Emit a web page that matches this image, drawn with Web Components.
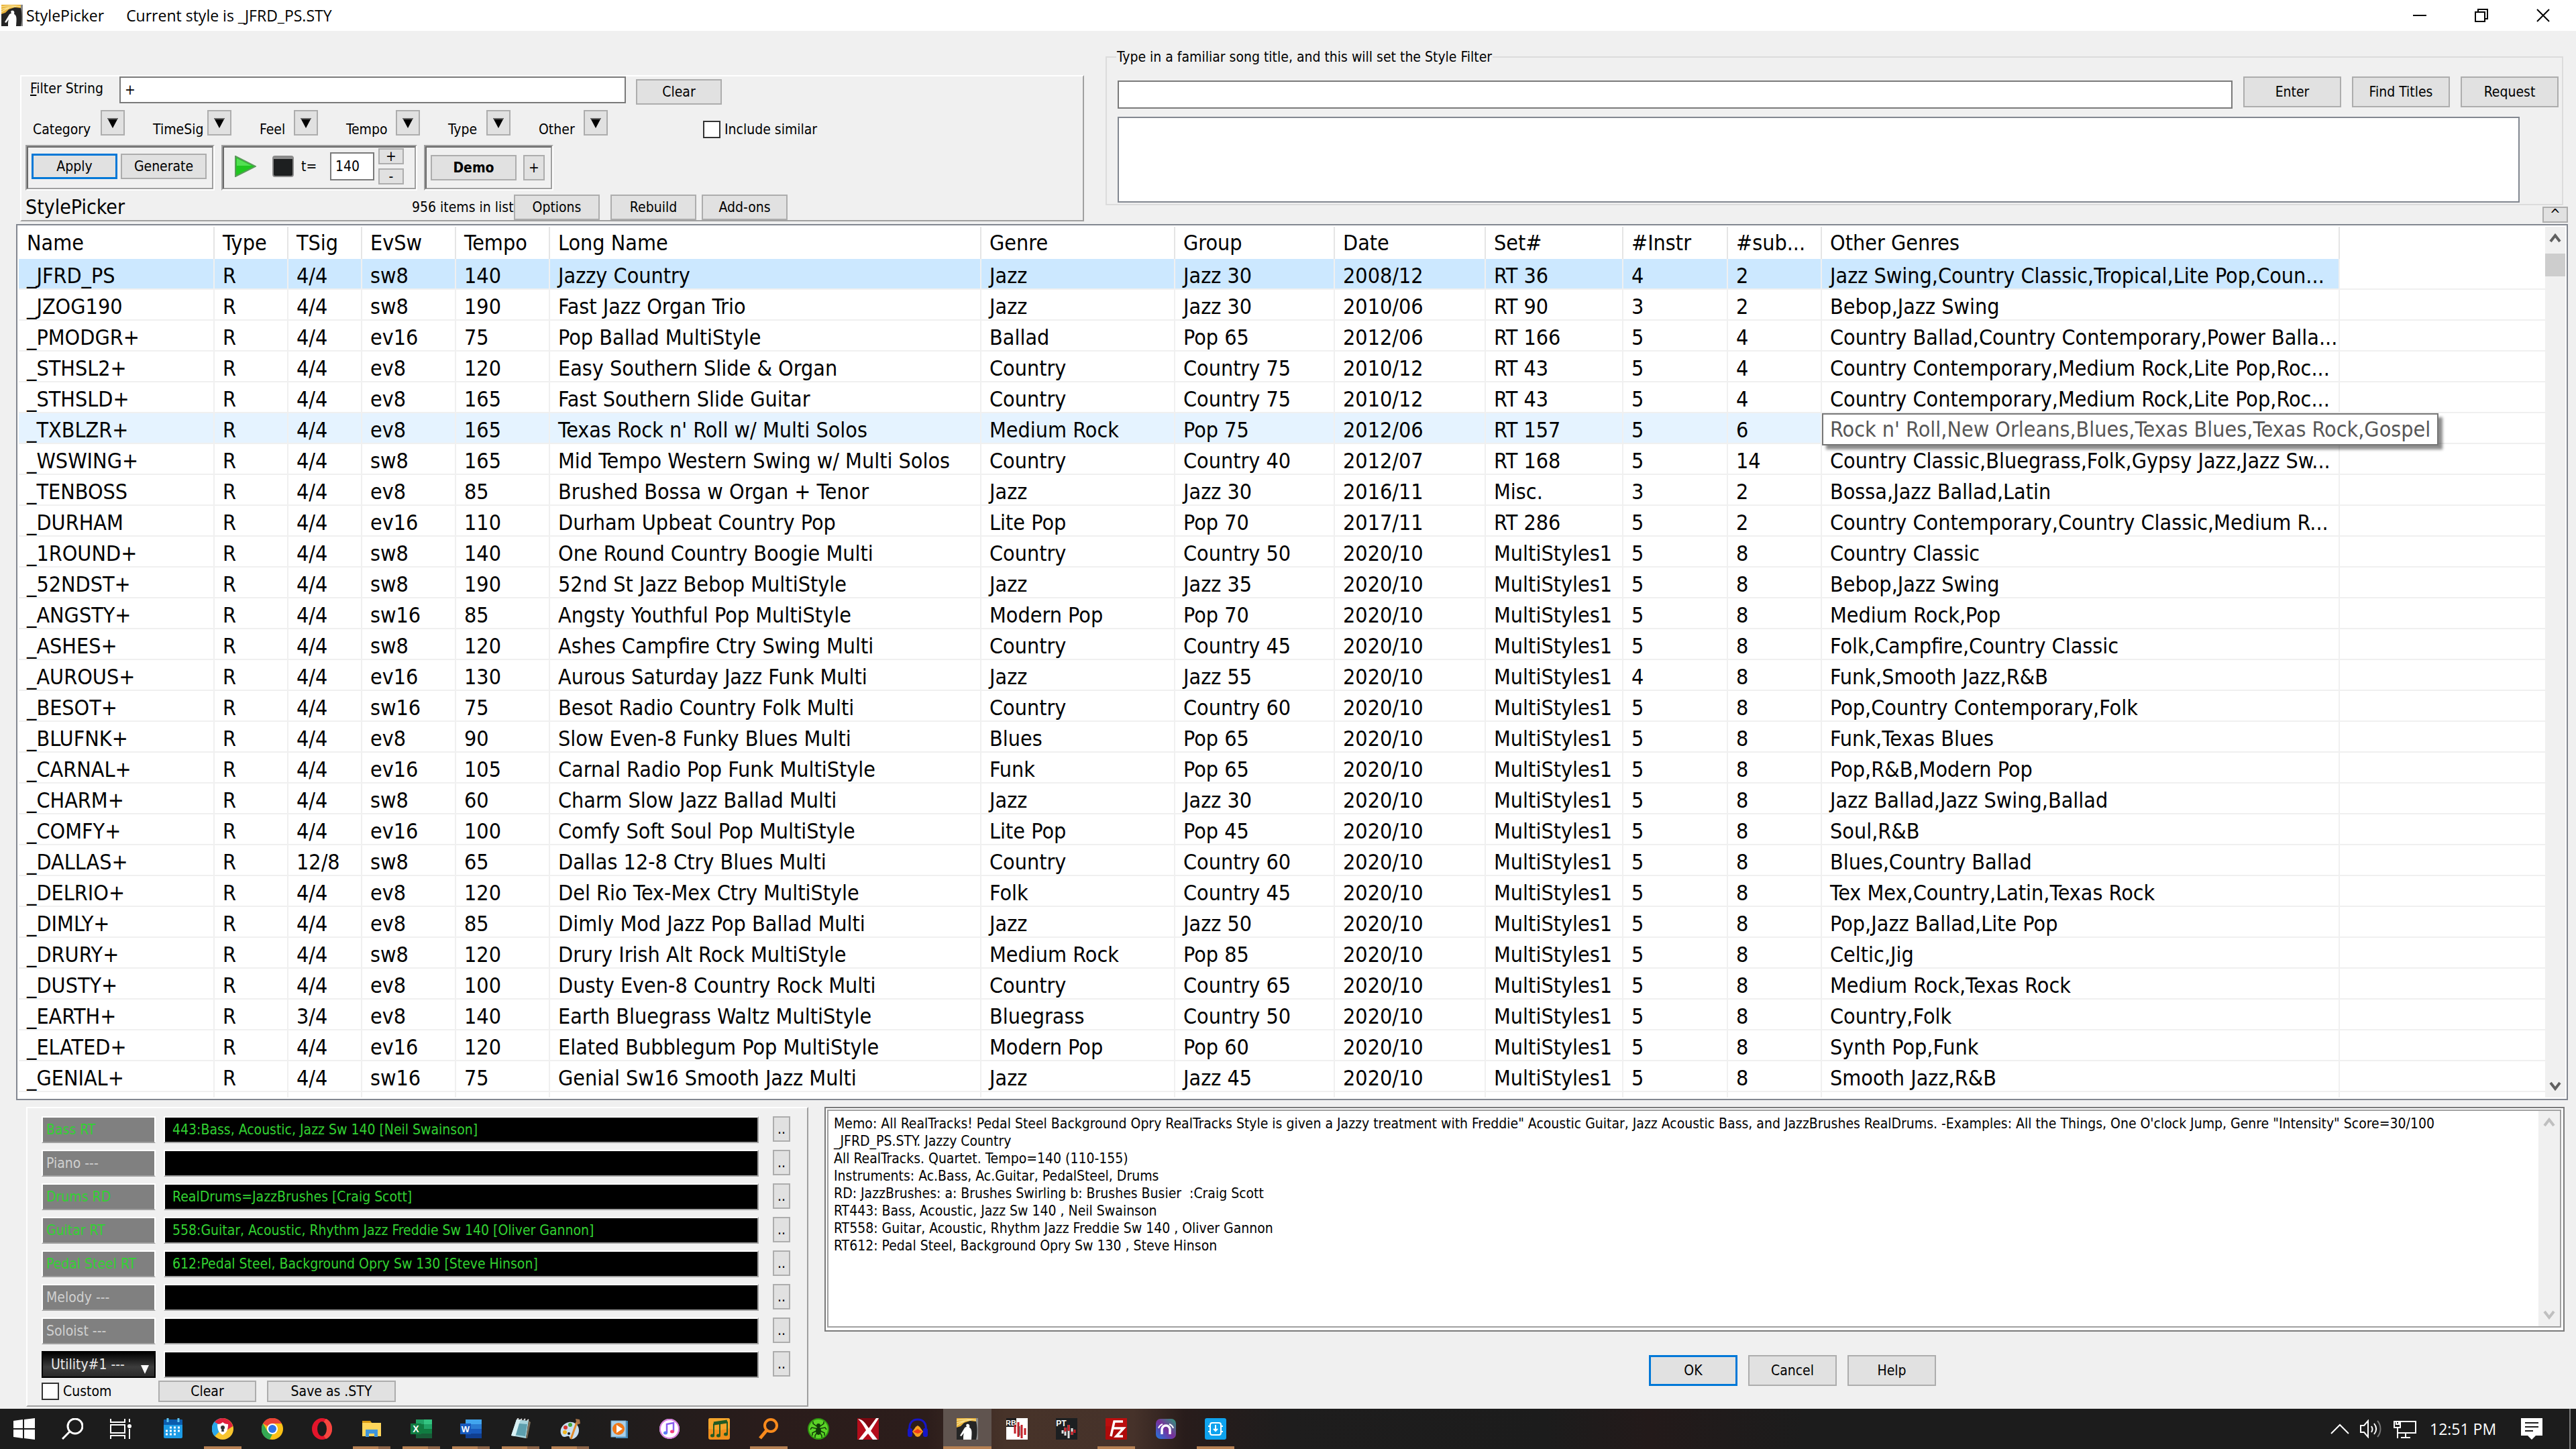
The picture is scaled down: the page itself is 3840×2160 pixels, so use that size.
<!DOCTYPE html>
<html lang="en">
<head>
<meta charset="utf-8">
<title>StylePicker</title>
<style>
  html, body { margin: 0; height: 100%; }
  body {
    --face: #f0f0f0; --btn: #e1e1e1; --btn-line: #adadad; --accent: #0078d7;
    --ui: "DejaVu Sans Condensed", "Noto Sans", sans-serif;
    --shell: "Open Sans", "Noto Sans", sans-serif;
    font: 21px/26px var(--ui); color: #000; background: var(--face);
  }
</style>
</head>
<body>
<style-picker-app></style-picker-app>

<script>
const base = `
  *, *::before, *::after { box-sizing: border-box; }
  :host { display: block; box-sizing: border-box; }
  button, input, select, textarea { font: inherit; color: inherit; margin: 0; padding: 0; border-radius: 0; outline: 0; }
  svg { display: block; flex: none; }
`;
function define(name, html, css, setup) {
  customElements.define(name, class extends HTMLElement {
    connectedCallback() {
      if (this.shadowRoot) return;
      const root = this.attachShadow({ mode: 'open' });
      root.innerHTML = `<style>${base}${css}</style>${typeof html === 'function' ? html(this) : html}`;
      if (setup) setup(this, root);
    }
  });
}

/* Push button; the label is slotted, size comes from the host */
define('win-button', el => `<button type="button"${el.title ? ` aria-label="${el.title}"` : ''}><slot></slot></button>`, `
  :host { width: 128px; height: 38px; flex: none; }
  button { display: flex; align-items: center; justify-content: center; width: 100%; height: 100%;
    background: var(--btn); border: 2px solid var(--btn-line); white-space: nowrap; }
  :host([primary]) button { border: 3px solid var(--accent); }
  :host([bold]) button { font-weight: bold; }
`);

/* Caption with a drop arrow button */
define('menu-field', el => `<label for="b">${el.getAttribute('caption')}</label>
  <button id="b" type="button"><svg width="16" height="16" viewBox="0 0 16 16"><path d="M0 1h16L8 16z" fill="#000"/><path d="M0 1h16l-1 2H1z" fill="#666"/></svg></button>`, `
  :host { display: flex; align-items: flex-end; justify-content: space-between; height: 42px; }
  label { white-space: nowrap; }
  button { align-self: flex-start; width: 36px; height: 38px; display: flex; align-items: center; justify-content: center;
    background: var(--btn); border: 2px solid var(--btn-line); }
`);

define('check-field', el => `<input id="c" type="checkbox"><label for="c">${el.getAttribute('caption')}</label>`, `
  :host { display: flex; align-items: center; gap: 6px; height: 26px; }
  input { appearance: none; width: 26px; height: 26px; background: #fff; border: 2px solid #333; }
`);

/* Raised outer panel */
define('raised-panel', `<slot></slot>`, `
  :host { border: 2px solid; border-color: #fff #a0a0a0 #a0a0a0 #fff; }
`);

/* Sunken tool group */
define('tool-group', `<div><slot></slot></div>`, `
  :host { height: 68px; border: 2px solid; border-color: #a0a0a0 #fff #fff #a0a0a0; }
  div { height: 100%; display: flex; align-items: center; padding-bottom: var(--foot-room, 0);
    border: 2px solid; border-color: #696969 #a0a0a0 #a0a0a0 #696969; }
  ::slotted(*) { flex: none; }
`);

define('scroll-rail', el => `<button type="button" aria-label="Scroll up"><svg width="18" height="14" viewBox="0 0 18 14"><path d="M2 12L9 3l7 9" /></svg></button>
  <div class="track">${el.hasAttribute('thumb') ? '<div class="thumb"></div>' : ''}</div>
  <button type="button" aria-label="Scroll down"><svg width="18" height="14" viewBox="0 0 18 14"><path d="M2 2l7 9 7-9" /></svg></button>`, `
  :host { display: flex; flex-direction: column; flex: none; width: 30px; background: var(--face); color: #606060; }
  :host([idle]) { color: #bfbfbf; width: 32px; }
  button { height: 34px; border: 0; background: none; display: flex; align-items: center; justify-content: center; }
  path { fill: none; stroke: currentColor; stroke-width: 4; }
  .track { flex: 1; padding-top: 6px; }
  .thumb { height: 34px; background: #cdcdcd; }
`);

const pgIcon = `<rect width="32" height="32" fill="#252525"/><path d="M0 0h29v5l-9-1-9 3-5 5-6 2z" fill="#e9b23a"/><path d="M0 3c10-2 20-2 29 0M0 7c8-3 14-4 22-4M0 11c4-3 6-5 12-6" stroke="#f7dd8a" stroke-width="1.5" fill="none"/><path d="M32 0v32h-3c2-7 2-20 0-27V0z" fill="#8a8a8a"/><path d="M15 9c4-1 5 2 4 5 4 2 4 6 3 18H10c0-5 0-7 1-10l-4 5-2-1 6-10c1-2 2-3 4-3-1-2-1-3 0-4z" fill="#fff"/>`;

define('title-bar', `
  <svg width="32" height="32" viewBox="0 0 32 32">${pgIcon}</svg>
  <span class="name">StylePicker</span><span>Current style is _JFRD_PS.STY</span>
  <div class="ctl">
    <button type="button" aria-label="Minimize"><svg width="20" height="20" viewBox="0 0 20 20"><path d="M0 10h20"/></svg></button>
    <button type="button" aria-label="Restore"><svg width="20" height="20" viewBox="0 0 20 20"><path d="M1 5h14v14H1zM5 5V1h14v14h-4"/></svg></button>
    <button type="button" aria-label="Close"><svg width="20" height="20" viewBox="0 0 20 20"><path d="M1 1l18 18M19 1L1 19"/></svg></button>
  </div>`, `
  :host { display: flex; align-items: center; height: 46px; flex: none; padding: 0 3px 0 2px; background: #fff; font: 23px/30px var(--shell); }
  .name { margin: 0 33px 0 5px; }
  .ctl { margin-left: auto; display: flex; align-self: stretch; }
  .ctl button { width: 92px; border: 0; background: none; display: flex; align-items: center; justify-content: center; }
  .ctl path { fill: none; stroke: #000; stroke-width: 2; }
`);

define('filter-panel', `
  <raised-panel>
    <div class="row filter"><label for="f"><u>F</u>ilter String</label><input id="f" type="text" value="+"><win-button>Clear</win-button></div>
    <div class="row menus">
      <menu-field caption="Category" style="width:137px"></menu-field>
      <menu-field caption="TimeSig" style="width:117px"></menu-field>
      <menu-field caption="Feel" style="width:87px"></menu-field>
      <menu-field caption="Tempo" style="width:110px"></menu-field>
      <menu-field caption="Type" style="width:93px"></menu-field>
      <menu-field caption="Other" style="width:103px"></menu-field>
      <check-field caption="Include similar"></check-field>
    </div>
    <div class="row groups">
      <tool-group class="g1"><win-button primary>Apply</win-button><win-button>Generate</win-button></tool-group>
      <tool-group class="g2">
        <button class="icon" type="button" aria-label="Play"><svg width="32" height="32" viewBox="0 0 32 32"><path d="M1 1l30 15L1 31z" fill="#1fc71f" stroke="#5a9a5a" stroke-width="2"/><path d="M3 4l22 11H3z" fill="#53e053"/></svg></button>
        <button class="icon stop" type="button" aria-label="Stop"><svg width="32" height="32" viewBox="0 0 32 32"><rect x="1" y="1" width="30" height="30" rx="3" fill="#1d1f20" stroke="#8a8a8a" stroke-width="2"/><path d="M2 2h28v3H2z" fill="#8d8d8d"/></svg></button>
        <label for="t">t=</label><input id="t" class="tempo" type="text" value="140">
        <span class="spin"><win-button title="Faster">+</win-button><win-button title="Slower">-</win-button></span>
      </tool-group>
      <tool-group class="g3"><win-button bold>Demo</win-button><win-button class="plus" title="Demo options">+</win-button></tool-group>
    </div>
    <div class="row foot"><span class="big">StylePicker</span><span class="count">956 items in list</span>
      <win-button>Options</win-button><win-button class="re">Rebuild</win-button><win-button class="add">Add-ons</win-button></div>
  </raised-panel>`, `
  :host { padding-top: 66px; }
  .row { display: flex; }
  .filter { height: 42px; padding-left: 13px; }
  .filter label { width: 133px; line-height: 36px; flex: none; }
  .filter input { width: 755px; height: 40px; padding: 0 6px; background: #fff; border: 2px solid #7a7a7a; }
  .filter win-button { margin-left: 15px; align-self: flex-end; }
  .menus { margin-top: 8px; padding-left: 17px; gap: 42px; height: 42px; align-items: flex-end; white-space: nowrap; }
  .menus menu-field { flex: none; }
  .menus check-field { margin-left: 100px; }
  .groups { margin-top: 10px; padding-left: 6px; gap: 10px; }
  .g1 { width: 282px; } .g2 { width: 292px; } .g3 { width: 193px; }
  .g1, .g2 { --foot-room: 4px; }
  .g1 win-button { margin-left: 5px; }
  .icon { border: 0; background: none; margin-left: 16px; }
  .stop { margin-left: 24px; }
  .g2 label { width: 43px; margin-left: 11px; }
  .tempo { width: 66px; height: 42px; padding: 0 6px; background: #fff; border: 2px solid #7a7a7a; }
  .spin { display: flex; flex-direction: column; gap: 6px; margin-left: 6px; }
  .spin win-button { width: 38px; height: 24px; }
  .g3 win-button { margin-left: 6px; }
  .g3 .plus { width: 32px; margin-left: 10px; }
  .foot { margin-top: 6px; padding-left: 6px; align-items: center; }
  .big { font-size: 30px; line-height: 34px; width: 576px; }
  .count { width: 152px; white-space: nowrap; }
  .re { margin-left: 16px; } .add { margin-left: 8px; }
`);

define('song-finder', `
  <fieldset>
    <legend><label for="s">Type in a familiar song title, and this will set the Style Filter</label></legend>
    <div class="row"><input id="s" type="text"><win-button>Enter</win-button><win-button>Find Titles</win-button><win-button>Request</win-button></div>
    <select size="4" aria-label="Matching songs"></select>
  </fieldset>
  <win-button class="fold" title="Collapse">^</win-button>`, `
  :host { display: flex; flex-direction: column; padding-top: 26px; min-width: 0; }
  fieldset { margin: 0 7px 0 0; padding: 16px 5px 2px 16px; border: 2px solid #dcdcdc; height: 234px; min-width: 0; }
  legend { margin-left: -2px; padding: 0 1px; }
  .row { display: flex; gap: 16px; height: 48px; }
  input { flex: 1; min-width: 0; height: 42px; align-self: flex-end; padding: 0 6px; background: #fff; border: 2px solid #7a7a7a; }
  .row win-button { width: 146px; height: 46px; }
  select { display: block; appearance: none; margin-top: 12px; width: calc(100% - 58px); height: 128px; background: #fff; border: 2px solid #828790; }
  .fold { width: 38px; height: 24px; margin-top: 2px; align-self: flex-end; }
`);

const columns = [['Name', 292], ['Type', 110], ['TSig', 110], ['EvSw', 140], ['Tempo', 140], ['Long Name', 643], ['Genre', 289], ['Group', 238], ['Date', 225], ['Set#', 205], ['#Instr', 156], ['#sub...', 140], ['Other Genres', 772]];
const rows = `
_JFRD_PS|4/4|sw8|140|Jazzy Country|Jazz|Jazz 30|2008/12|RT 36|4|2|Jazz Swing,Country Classic,Tropical,Lite Pop,Coun...
_JZOG190|4/4|sw8|190|Fast Jazz Organ Trio|Jazz|Jazz 30|2010/06|RT 90|3|2|Bebop,Jazz Swing
_PMODGR+|4/4|ev16|75|Pop Ballad MultiStyle|Ballad|Pop 65|2012/06|RT 166|5|4|Country Ballad,Country Contemporary,Power Balla...
_STHSL2+|4/4|ev8|120|Easy Southern Slide & Organ|Country|Country 75|2010/12|RT 43|5|4|Country Contemporary,Medium Rock,Lite Pop,Roc...
_STHSLD+|4/4|ev8|165|Fast Southern Slide Guitar|Country|Country 75|2010/12|RT 43|5|4|Country Contemporary,Medium Rock,Lite Pop,Roc...
_TXBLZR+|4/4|ev8|165|Texas Rock n' Roll w/ Multi Solos|Medium Rock|Pop 75|2012/06|RT 157|5|6|
_WSWING+|4/4|sw8|165|Mid Tempo Western Swing w/ Multi Solos|Country|Country 40|2012/07|RT 168|5|14|Country Classic,Bluegrass,Folk,Gypsy Jazz,Jazz Sw...
_TENBOSS|4/4|ev8|85|Brushed Bossa w Organ + Tenor|Jazz|Jazz 30|2016/11|Misc.|3|2|Bossa,Jazz Ballad,Latin
_DURHAM|4/4|ev16|110|Durham Upbeat Country Pop|Lite Pop|Pop 70|2017/11|RT 286|5|2|Country Contemporary,Country Classic,Medium R...
_1ROUND+|4/4|sw8|140|One Round Country Boogie Multi|Country|Country 50|2020/10|MultiStyles1|5|8|Country Classic
_52NDST+|4/4|sw8|190|52nd St Jazz Bebop MultiStyle|Jazz|Jazz 35|2020/10|MultiStyles1|5|8|Bebop,Jazz Swing
_ANGSTY+|4/4|sw16|85|Angsty Youthful Pop MultiStyle|Modern Pop|Pop 70|2020/10|MultiStyles1|5|8|Medium Rock,Pop
_ASHES+|4/4|sw8|120|Ashes Campfire Ctry Swing Multi|Country|Country 45|2020/10|MultiStyles1|5|8|Folk,Campfire,Country Classic
_AUROUS+|4/4|ev16|130|Aurous Saturday Jazz Funk Multi|Jazz|Jazz 55|2020/10|MultiStyles1|4|8|Funk,Smooth Jazz,R&B
_BESOT+|4/4|sw16|75|Besot Radio Country Folk Multi|Country|Country 60|2020/10|MultiStyles1|5|8|Pop,Country Contemporary,Folk
_BLUFNK+|4/4|ev8|90|Slow Even-8 Funky Blues Multi|Blues|Pop 65|2020/10|MultiStyles1|5|8|Funk,Texas Blues
_CARNAL+|4/4|ev16|105|Carnal Radio Pop Funk MultiStyle|Funk|Pop 65|2020/10|MultiStyles1|5|8|Pop,R&B,Modern Pop
_CHARM+|4/4|sw8|60|Charm Slow Jazz Ballad Multi|Jazz|Jazz 30|2020/10|MultiStyles1|5|8|Jazz Ballad,Jazz Swing,Ballad
_COMFY+|4/4|ev16|100|Comfy Soft Soul Pop MultiStyle|Lite Pop|Pop 45|2020/10|MultiStyles1|5|8|Soul,R&B
_DALLAS+|12/8|sw8|65|Dallas 12-8 Ctry Blues Multi|Country|Country 60|2020/10|MultiStyles1|5|8|Blues,Country Ballad
_DELRIO+|4/4|ev8|120|Del Rio Tex-Mex Ctry MultiStyle|Folk|Country 45|2020/10|MultiStyles1|5|8|Tex Mex,Country,Latin,Texas Rock
_DIMLY+|4/4|ev8|85|Dimly Mod Jazz Pop Ballad Multi|Jazz|Jazz 50|2020/10|MultiStyles1|5|8|Pop,Jazz Ballad,Lite Pop
_DRURY+|4/4|sw8|120|Drury Irish Alt Rock MultiStyle|Medium Rock|Pop 85|2020/10|MultiStyles1|5|8|Celtic,Jig
_DUSTY+|4/4|ev8|100|Dusty Even-8 Country Rock Multi|Country|Country 65|2020/10|MultiStyles1|5|8|Medium Rock,Texas Rock
_EARTH+|3/4|ev8|140|Earth Bluegrass Waltz MultiStyle|Bluegrass|Country 50|2020/10|MultiStyles1|5|8|Country,Folk
_ELATED+|4/4|ev16|120|Elated Bubblegum Pop MultiStyle|Modern Pop|Pop 60|2020/10|MultiStyles1|5|8|Synth Pop,Funk
_GENIAL+|4/4|sw16|75|Genial Sw16 Smooth Jazz Multi|Jazz|Jazz 45|2020/10|MultiStyles1|5|8|Smooth Jazz,R&B`.trim().split('\n').map(r => { const c = r.split('|'); c.splice(1, 0, 'R'); return c; });
const esc = t => t.replace(/&/g, '&amp;');

define('style-list', () => `
  <div class="view"><table>
    <colgroup>${columns.map(c => `<col style="width:${c[1]}px">`).join('')}<col></colgroup>
    <thead><tr>${columns.map(c => `<th scope="col">${c[0]}</th>`).join('')}<td class="rest"></td></tr></thead>
    <tbody>${rows.map((r, i) => `<tr class="${i === 0 ? 'sel' : i === 5 ? 'hot' : ''}">${r.map((c, j) => `<td>${i === 5 && j === 12 ? `<span class="tip" role="tooltip">Rock n' Roll,New Orleans,Blues,Texas Blues,Texas Rock,Gospel</span>` : esc(c)}</td>`).join('')}<td class="rest"></td></tr>`).join('')}
    <tr>${'<td></td>'.repeat(13)}<td class="rest"></td></tr></tbody>
  </table></div><scroll-rail thumb></scroll-rail>`, `
  :host { display: flex; flex: 1; min-height: 0; background: #fff; border: 2px solid #828790; padding: 2px; font-size: 32px; line-height: 38px; }
  .view { flex: 1; min-width: 0; overflow: hidden; }
  table { width: 100%; table-layout: fixed; border-spacing: 0; }
  th, td { padding: 0 0 0 12px; text-align: left; font-weight: normal; white-space: nowrap; border-right: 2px solid #f0f0f0; }
  th { height: 48px; border-right-color: #e5e5e5; }
  tbody td { height: 46px; padding-top: 6px; border-bottom: 2px solid #f0f0f0; }
  td.rest { border-right: 0; }
  .sel td:not(.rest) { background: #cce8ff; }
  .hot td:not(.rest) { background: #e5f3ff; }
  .hot td { position: relative; }
  .tip { position: absolute; z-index: 1; left: 0; top: 0; height: 48px; padding: 4px 10px 0 10px; line-height: 36px; color: #575757;
    background: #fff; border: 2px solid #767676; box-shadow: 6px 6px 4px rgba(0,0,0,.45); }
`);

const tracks = [['Bass RT', '443:Bass, Acoustic, Jazz Sw 140 [Neil Swainson]'], ['Piano ---', ''], ['Drums RD', 'RealDrums=JazzBrushes [Craig Scott]'], ['Guitar RT', '558:Guitar, Acoustic, Rhythm Jazz Freddie Sw 140 [Oliver Gannon]'], ['Pedal Steel RT', '612:Pedal Steel, Background Opry Sw 130 [Steve Hinson]'], ['Melody ---', ''], ['Soloist ---', '']];

define('track-panel', () => `
  <raised-panel>
    <div class="tracks">
    ${tracks.map(([n, v], i) => `<div class="track"><label for="t${i}" class="${v ? 'on' : ''}">${n}</label><input id="t${i}" type="text" readonly value="${v}"><win-button title="${n}">..</win-button></div>`).join('')}
    <div class="track"><span class="util"><select aria-label="Utility track"><option>Utility#1 ---</option></select><svg width="12" height="14" viewBox="0 0 12 14"><path d="M0 1h12L6 14z" fill="#fff"/></svg></span><input type="text" readonly aria-label="Utility style"><win-button title="Utility">..</win-button></div>
    </div>
    <div class="foot"><check-field caption="Custom"></check-field><win-button class="clear">Clear</win-button><win-button class="save">Save as .STY</win-button></div>
  </raised-panel>`, `
  raised-panel { height: 100%; padding: 12px 25px 0 21px; }
  .tracks { display: flex; flex-direction: column; gap: 10px; }
  .track { display: flex; height: 40px; }
  label, .util { width: 170px; flex: none; }
  label { padding-left: 5px; line-height: 36px; background: #808080; color: #d0d0d0; border: 2px solid; border-color: #fff #fff #a0a0a0 #fff; white-space: nowrap; }
  label.on, input { color: #32d232; }
  input { flex: 1; min-width: 0; margin-left: 12px; padding: 0 11px; background: #000; border: 2px solid; border-color: #fff #a0a0a0 #a0a0a0 #fff; }
  .track win-button { width: 26px; margin-left: 21px; }
  .util { display: flex; position: relative; color: #e8e8e8; }
  select { appearance: none; width: 100%; padding: 0 12px; background: linear-gradient(#000, #3c3c3c 60%, #2a2a2a); border: 2px solid #000; }
  .util svg { position: absolute; right: 10px; bottom: 6px; pointer-events: none; }
  .foot { display: flex; align-items: center; margin-top: 3px; height: 34px; }
  .foot check-field { width: 174px; }
  .clear { width: 146px; height: 32px; }
  .save { width: 192px; height: 32px; margin-left: 16px; }
`);

const memo = `Memo: All RealTracks! Pedal Steel Background Opry RealTracks Style is given a Jazzy treatment with Freddie" Acoustic Guitar, Jazz Acoustic Bass, and JazzBrushes RealDrums. -Examples: All the Things, One O'clock Jump, Genre "Intensity" Score=30/100
_JFRD_PS.STY. Jazzy Country
All RealTracks. Quartet. Tempo=140 (110-155)
Instruments: Ac.Bass, Ac.Guitar, PedalSteel, Drums
RD: JazzBrushes: a: Brushes Swirling b: Brushes Busier  :Craig Scott
RT443: Bass, Acoustic, Jazz Sw 140 , Neil Swainson
RT558: Guitar, Acoustic, Rhythm Jazz Freddie Sw 140 , Oliver Gannon
RT612: Pedal Steel, Background Opry Sw 130 , Steve Hinson`;

define('memo-pane', `
  <div class="outer"><div class="inner"><textarea readonly aria-label="Style memo"></textarea><scroll-rail idle></scroll-rail></div></div>
  <div class="actions"><span></span><win-button primary>OK</win-button><win-button>Cancel</win-button><win-button>Help</win-button></div>`, `
  :host { display: flex; flex-direction: column; min-width: 0; }
  .outer { height: 335px; padding: 2px 3px 4px 2px; background: #fff; border: 2px solid #7a7a7a; }
  .inner { height: 100%; display: flex; border: 2px solid #a0a0a0; }
  textarea { flex: 1; min-width: 0; resize: none; overflow: hidden; white-space: pre; border: 0; padding: 6px 8px; background: #fff; }
  .actions { display: grid; grid-template-columns: 1213fr auto auto auto 921fr; gap: 16px; margin-top: 35px; }
  .actions win-button { width: 132px; height: 46px; }
`, (el, root) => { root.querySelector('textarea').value = memo; });

/* Taskbar entries: [name, state, artwork in a 32-unit box] */
const apps = [
  ['Calendar', '', `<rect x="2" y="2" width="28" height="28" rx="2" fill="#1c9be6"/><path d="M2 4a2 2 0 0 1 2-2h24a2 2 0 0 1 2 2v6H2z" fill="#0b5cad"/><path d="M8 0v6M24 0v6" stroke="#5fc6f2" stroke-width="3"/><path d="M11 14h3m3 0h3m3 0h3M5 19h3m3 0h3m3 0h3m3 0h3M5 24h3m3 0h3m3 0h3" stroke="#fff" stroke-width="3"/>`],
  ['Secure browser', 'run', `<circle cx="16" cy="16" r="16" fill="#f7c52e"/><path d="M16 0a16 16 0 0 1 15 12l-9 6-6-8z" fill="#e0203c"/><path d="M16 0a16 16 0 0 0-12 27l8-8-1-9 8-1z" fill="#2aa7ea"/><path d="M16 0C10 0 6 3 4 6l8 4 12-2z" fill="#e0203c"/><path d="M8 9c4 0 6-1 8-3 2 2 4 3 8 3 0 8-2 13-8 16-6-3-8-8-8-16z" fill="#fff"/><circle cx="16" cy="14" r="3" fill="#333"/><path d="M15 14h2l1 6h-4z" fill="#333"/>`],
  ['Chrome', '', `<circle cx="16" cy="16" r="16" fill="#fbc116"/><path d="M2 8A16 16 0 0 1 30 8H16l-7 4z" fill="#ea4335"/><path d="M2 8l7 12 7 4-4 8A16 16 0 0 1 2 8z" fill="#34a853"/><circle cx="16" cy="16" r="8" fill="#fff"/><circle cx="16" cy="16" r="6" fill="#2f74e8"/>`],
  ['Opera', '', `<ellipse cx="16" cy="16" rx="15" ry="16" fill="#e3152b"/><path d="M22 1c12 5 12 25 0 30-3-3-5-8-5-15s2-12 5-15z" fill="#f7463f"/><ellipse cx="16" cy="16" rx="7" ry="11" fill="#1c1c1c"/>`],
  ['Explorer', 'many', `<path d="M2 4h12l3 4H2z" fill="#d99a13"/><rect x="2" y="7" width="28" height="20" fill="#ffd65c"/><path d="M7 28V17h18v11h-5v-5h-8v5z" fill="#3f96dc"/>`],
  ['Excel', 'many', `<path d="M8 2h12v7H8z" fill="#21a366"/><path d="M20 2h12v7H20z" fill="#33c481"/><path d="M8 9h12v14H8z" fill="#107c41"/><path d="M20 9h12v7H20z" fill="#21a366"/><path d="M20 16h12v7H20z" fill="#107c41"/><path d="M8 23h24v7H8z" fill="#185c37"/><rect y="8" width="16" height="16" fill="#107c41"/><text x="8" y="21" font-size="14" font-weight="bold" text-anchor="middle" fill="#fff">X</text>`],
  ['Word', 'many', `<path d="M8 2h24v7H8z" fill="#41a5ee"/><path d="M8 9h24v7H8z" fill="#2b7cd3"/><path d="M8 16h24v7H8z" fill="#185abd"/><path d="M8 23h24v7H8z" fill="#103f91"/><rect y="8" width="16" height="16" fill="#185abd"/><text x="8" y="21" font-size="13" font-weight="bold" text-anchor="middle" fill="#fff">W</text>`],
  ['Notepad', 'many', `<path d="M10 2l18 2-4 26-22-4z" fill="#a8d4dd"/><path d="M10 2l6 0-8 25-6-1z" fill="#d9f1f4"/><path d="M14 8l12 1-3 18-14-2z" fill="#5d9fae"/><path d="M11 2l2-2M16 3l2-2M21 3l2-2M26 4l2-2" stroke="#ddd" stroke-width="2"/><path d="M28 4l3 2-5 24h-2z" fill="#7a6a56"/>`],
  ['Paint', 'many', `<path d="M14 6C4 8-1 18 3 25c3 6 9 1 11 2s0 5 6 4c7-2 11-11 8-18-2-5-8-8-14-7z" fill="#c9dff0"/><circle cx="9" cy="14" r="3" fill="#d8362e"/><circle cx="8" cy="21" r="3" fill="#f0b41e"/><circle cx="16" cy="10" r="3" fill="#45a83c"/><circle cx="14" cy="23" r="2" fill="#1c1c1c"/><path d="M26 6L17 31" stroke="#e28b2c" stroke-width="3"/><path d="M24 1l6 1 1 6-5 2z" fill="#a9754a"/>`],
  ['Media', '', `<rect x="10" y="4" width="18" height="26" fill="#3f86b8"/><rect x="3" y="4" width="22" height="24" fill="#a9d0ea" stroke="#6fa5c9"/><circle cx="14" cy="16" r="9" fill="#f07818"/><path d="M11 10l9 6-9 6z" fill="#fff"/>`],
  ['Music', '', `<circle cx="16" cy="16" r="15" fill="#fff"/><circle cx="16" cy="16" r="14" fill="none" stroke="#d77be0" stroke-width="2"/><path d="M12 22V9l10-2v13" stroke="#8a5cf0" stroke-width="2.5" fill="none"/><ellipse cx="10" cy="22" rx="3" ry="2.5" fill="#5a7cf5"/><ellipse cx="20" cy="20" rx="3" ry="2.5" fill="#f0417e"/>`],
  ['Band', '', `<rect width="32" height="32" rx="3" fill="#ef8f1c"/><path d="M0 3a3 3 0 0 1 3-3h26a3 3 0 0 1 3 3v12l-14 3-18-2z" fill="#f5a52b"/><path d="M8 26V8M17 26V7M28 24V5" stroke="#205a24" stroke-width="2" fill="none"/><path d="M8 8l20-3" stroke="#205a24" stroke-width="5"/><ellipse cx="6" cy="26" rx="3" ry="2.5" fill="#205a24"/><ellipse cx="15" cy="26" rx="3" ry="2.5" fill="#205a24"/><ellipse cx="26" cy="24" rx="3" ry="2.5" fill="#205a24"/>`],
  ['Search tool', 'run', `<circle cx="19" cy="11" r="9" fill="none" stroke="#f98a1c" stroke-width="4"/><path d="M13 18L3 30" stroke="#f98a1c" stroke-width="5"/>`],
  ['Spider', '', `<circle cx="16" cy="16" r="15" fill="#5bd427" stroke="#2f9510" stroke-width="2"/><ellipse cx="16" cy="19" rx="4" ry="6" fill="#123a08"/><circle cx="16" cy="11" r="3" fill="#123a08"/><path d="M16 14L8 8v-3M16 14l8-6V5M16 16L6 14l-2 3M16 16l10-2 2 3M15 18l-8 4v4M17 18l8 4v4M15 20l-4 6v3M17 20l4 6v3" stroke="#123a08" stroke-width="1.5" fill="none"/>`],
  ['X editor', '', `<rect width="32" height="32" fill="#b30d1b"/><path d="M0 0h32L16 16z" fill="#7d0711"/><path d="M1 1c8 1 12 8 16 14L28 0h4L20 19l10 13h-7l-7-9-8 9H2l11-14C9 11 6 6 1 1z" fill="#fff"/>`],
  ['Audacity', '', `<path d="M4 20C2 6 9 2 16 2s14 4 12 18" fill="none" stroke="#1616c8" stroke-width="3"/><rect x="1" y="15" width="7" height="13" rx="3" fill="#1616c8"/><rect x="24" y="15" width="7" height="13" rx="3" fill="#1616c8"/><path d="M8 20l3-4 2-3 3-2 3 2 2 3 3 4-3 4-2 3-3 1-3-1-2-3z" fill="#f5a01e"/><path d="M9 20l4-2 3-2 3 2 4 2-4 2-3 1-3-1z" fill="#ef3b1a"/>`],
  ['Band-in-a-Box', 'active', pgIcon],
  ['RealBand', '', `<rect width="32" height="32" fill="#fff"/><path d="M0 0h15v13H0z" fill="#1d1d1d"/><text x="7" y="11" font-size="11" font-weight="bold" text-anchor="middle" fill="#fff">RB</text><path d="M13 10v13M18 6v22M23 10v20M28 15v10" stroke="#c21f27" stroke-width="3"/><path d="M20 12v14" stroke="#222" stroke-width="1"/>`],
  ['Power Tracks', '', `<rect width="32" height="32" fill="#1c1f21"/><text x="8" y="12" font-size="12" font-weight="bold" text-anchor="middle" fill="#fff">PT</text><path d="M10 18v5M14 14v12M19 10v20M24 15v10" stroke="#e2e2e2" stroke-width="3"/><path d="M14 14v6M19 10v9M24 20v5M28 17v5" stroke="#c81e25" stroke-width="3"/>`],
  ['FileZilla', 'run', `<rect width="32" height="32" rx="1" fill="#b00a0a"/><path d="M0 0h32v12H0z" fill="#c81212" opacity=".5"/><path d="M8 27L13 5h13M10 15h11M17 15h10l-11 12h10" fill="none" stroke="#fff" stroke-width="3.5"/>`],
  ['N app', '', `<defs><linearGradient id="n" x1="0" y1="1" x2="1" y2="0"><stop offset="0" stop-color="#1d7be0"/><stop offset=".5" stop-color="#7a2f9c"/><stop offset="1" stop-color="#2d9c78"/></linearGradient></defs><rect x="1" y="1" width="30" height="30" rx="7" fill="url(#n)"/><path d="M10 24v-7a6 6 0 0 1 12 0v7" fill="none" stroke="#fff" stroke-width="3.5"/><path d="M5 15c1-3 3-5 6-6M27 15c-1-3-3-5-6-6" fill="none" stroke="#fff" stroke-width="2"/>`],
  ['Device', 'run', `<rect width="32" height="32" rx="3" fill="#0fa3ee"/><rect x="8" y="7" width="16" height="18" rx="3" fill="none" stroke="#fff" stroke-width="2"/><path d="M16 10v9M13 16l3 3 3-3M5 12h3M5 20h3M24 12h3M24 20h3" fill="none" stroke="#fff" stroke-width="2"/>`]
];

define('task-bar', () => `
  <div class="sys">
    <button type="button" aria-label="Start"><svg width="32" height="32" viewBox="0 0 32 32" fill="#fff"><path d="M0 4l14-2v13H0zM16 2l16-2v15H16zM0 17h14v13L0 28zM16 17h16v15l-16-2z"/></svg></button>
    <button type="button" aria-label="Search"><svg width="32" height="32" viewBox="0 0 32 32"><circle cx="20" cy="12" r="11" fill="none" stroke="#fff" stroke-width="3"/><path d="M12 20L1 31" stroke="#fff" stroke-width="3"/></svg></button>
    <button type="button" aria-label="Task view"><svg width="32" height="32" viewBox="0 0 32 32" fill="none" stroke="#fff" stroke-width="2"><path d="M1 1v5h21V1M1 31v-5h21v5M1 10h21v12H1zM29 1v5M29 16v15"/><circle cx="29" cy="12" r="3" fill="#fff" stroke="none"/></svg></button>
  </div>
  <div class="apps">${apps.map(a => `<button type="button" class="${a[1]}" aria-label="${a[0]}"><svg width="32" height="32" viewBox="0 0 32 32">${a[2]}</svg></button>`).join('')}</div>
  <div class="tray">
    <svg width="28" height="16" viewBox="0 0 28 16"><path d="M1 15L14 2l13 13" /></svg>
    <svg width="34" height="28" viewBox="0 0 34 28"><path d="M1 9h5l6-7v24l-6-7H1zM17 10c2 3 2 6 0 9M21 6c4 5 4 11 0 16"/><path d="M26 2c6 7 6 17 0 24" opacity=".4"/></svg>
    <svg width="34" height="28" viewBox="0 0 34 28"><path d="M11 3h22v17H6M1 3h9v9H1zM6 12v16M4 3v4h4V3M18 20v6M11 27h14"/></svg>
    <time>12:51 PM</time>
    <svg class="note" width="32" height="32" viewBox="0 0 32 32"><path d="M0 0h32v26h-10l-6 6-6-6H0z" fill="#fff"/><path d="M6 7h20M6 13h20M6 19h12" stroke="#1c1c1c"/></svg>
  </div>`, `
  :host { display: flex; height: 60px; flex: none; color: #fff; font: 23px/30px var(--shell);
    background: linear-gradient(90deg, #1c1c1c 22%, #2a1c1b 30%, #2c1d1b 36%, #473329 39%, #46322a 44%, #281c1b 46%, #1e1d1d 50%, #1c1c1c 60%, #231a1a 64%, #1c1c1c 70%); }
  button { position: relative; border: 0; background: none; display: flex; align-items: center; justify-content: center; }
  svg text { font-family: "Liberation Sans", sans-serif; }
  .sys, .apps { display: flex; }
  .sys button { width: 72px; }
  .apps { padding-left: 5px; }
  .apps button { width: 74px; }
  .run::after, .many::after, .active::after { content: ""; position: absolute; bottom: 0; height: 4px; left: 9px; right: 9px; background: #b57f52; }
  .many::after { background: linear-gradient(90deg, #b57f52 38px, #8a6246 38px); }
  .active { background: linear-gradient(#60544f, #60544f) content-box; padding: 0 1px; }
  .active::after { left: 1px; right: 1px; }
  .tray { margin-left: auto; width: 358px; display: flex; align-items: center; border-right: 2px solid #7b7b7b; margin-right: 8px; }
  .tray path { fill: none; stroke: #fff; stroke-width: 2; }
  .tray svg { margin-right: 16px; }
  .tray svg:nth-of-type(3) { margin-right: 20px; }
  .tray time { flex: 1; white-space: nowrap; }
  .tray .note { margin-right: 40px; }
  .tray .note path:first-child { fill: #fff; stroke: none; }
  .tray .note path:last-child { stroke: #1c1c1c; }
`);

define('style-picker-app', `
  <title-bar></title-bar>
  <main>
    <div class="top"><filter-panel></filter-panel><song-finder></song-finder></div>
    <style-list></style-list>
    <div class="bottom"><track-panel></track-panel><memo-pane></memo-pane></div>
  </main>
  <task-bar></task-bar>`, `
  :host { display: flex; flex-direction: column; height: 100vh; }
  main { flex: 1; min-height: 0; display: flex; flex-direction: column; background: var(--face); }
  .top { display: grid; grid-template-columns: minmax(0, 1586fr) minmax(0, 2180fr); gap: 32px; padding: 0 12px 2px 30px; flex: none; }
  style-list { margin: 0 12px 0 24px; }
  .bottom { display: grid; grid-template-columns: minmax(0, 1166fr) minmax(0, 2594fr); gap: 24px; margin-top: 10px; padding: 0 17px 3px 39px; height: 450px; flex: none; }
`);
</script>
</body>
</html>
